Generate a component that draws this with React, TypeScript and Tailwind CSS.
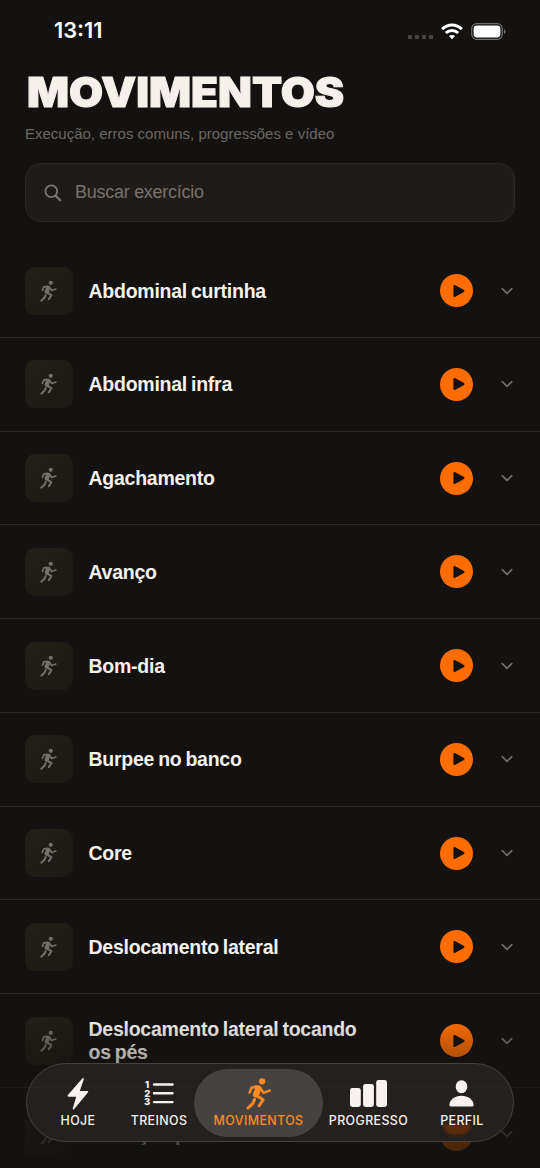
import type { ReactNode } from 'react'

const EXERCISES = [
  'Abdominal curtinha',
  'Abdominal infra',
  'Agachamento',
  'Avanço',
  'Bom-dia',
  'Burpee no banco',
  'Core',
  'Deslocamento lateral',
  'Deslocamento lateral tocando os pés',
  'Elevação pélvica',
]

function RunIcon({ className }: { className?: string }) {
  return (
    <svg viewBox="46 20 80 100" className={className} fill="none" stroke="currentColor" strokeLinecap="round" strokeLinejoin="round">
      <circle cx="95" cy="33" r="9.5" fill="currentColor" stroke="none" />
      <path d="M70 46h14c7 0 10 5 8 12l-6 18c-2 8-14 8-18 2-2-3-1-6 0-9l5-14Z" fill="currentColor" stroke="none" />
      <path d="M80 49.5 63 51.5 57 67M90 54l9 14 19-7" strokeWidth="7.5" />
      <path d="m77 76 21 13-12 18" strokeWidth="9" />
      <path d="M72 88 67 100 52 114" strokeWidth="9" />
    </svg>
  )
}

function StatusBar() {
  return (
    <div className="flex h-[62px] shrink-0 items-center justify-between pl-[54px] pr-[34px] text-white">
      <span className="text-[21.8px] font-semibold leading-none">13:11</span>
      <div className="flex items-center">
        <div className="mr-2 mt-[11px] flex gap-[3px]">
          {[0, 1, 2, 3].map(i => (
            <span key={i} className="h-1 w-1 rounded-[1px] bg-[#484644]" />
          ))}
        </div>
        <svg viewBox="0 0 22 17" className="mr-2 h-[17px] w-[22px]" fill="none" stroke="white" strokeWidth="3">
          <path d="M1.2 6.2C6.8.7 15.2.7 20.8 6.2" />
          <path d="M4.8 10c3.6-3.4 8.8-3.4 12.4 0" />
          <path d="M11 16.2 7.9 13c1.8-1.5 4.4-1.5 6.2 0Z" fill="white" stroke="none" />
        </svg>
        <svg viewBox="0 0 35 17" className="h-[17px] w-[35px]">
          <rect x=".7" y=".7" width="30.6" height="15.6" rx="5" fill="none" stroke="#72706f" strokeWidth="1.2" />
          <rect x="2.6" y="2.6" width="26.8" height="11.8" rx="3.4" fill="white" />
          <path d="M33 6c2 .8 2 4.2 0 5Z" fill="#72706f" />
        </svg>
      </div>
    </div>
  )
}

function ExerciseRow({ name }: { name: string }) {
  return (
    <li className="flex h-[93.75px] shrink-0 items-center border-b border-[#2a2826] pl-[25px] pr-[27px]">
      <div className="flex h-12 w-12 shrink-0 items-center justify-center rounded-[10px] bg-linear-to-br from-[#231f18] to-[#1b1914]">
        <RunIcon className="h-[22px] w-[17.6px] text-[#74706b]" />
      </div>
      <p className="ml-[15.5px] w-[290px] pt-px font-['Liberation_Sans',sans-serif] text-[19.5px] font-bold leading-[23px] tracking-[-0.25px] text-[#f5f1ec] [word-spacing:-1.2px]">
        {name}
      </p>
      <div className="ml-auto flex h-[33px] w-[33px] shrink-0 items-center justify-center rounded-full bg-[#ff6d00]">
        <svg viewBox="0 0 12 14" className="ml-[5px] h-[14px] w-3" fill="#141210" stroke="#141210" strokeWidth="2" strokeLinejoin="round">
          <path d="M1.4 2v10L10.5 7Z" />
        </svg>
      </div>
      <svg viewBox="0 0 12 8" className="ml-7 h-2 w-3 shrink-0" fill="none" stroke="#73706d" strokeWidth="1.6" strokeLinecap="round" strokeLinejoin="round">
        <path d="m1.2 1.6 4.8 4.8 4.8-4.8" />
      </svg>
    </li>
  )
}

function Tab({ label, active, className, children }: { label: string; active?: boolean; className: string; children: ReactNode }) {
  return (
    <div
      className={`relative flex h-[68px] shrink-0 flex-col items-center justify-end pb-[9px] ${className} ${
        active ? 'rounded-full bg-[#464240] text-[#ff8a24]' : 'text-[#f7f2ef]'
      }`}
    >
      <div className="flex h-[34px] items-center justify-center">{children}</div>
      <span className="mt-[3px] whitespace-nowrap text-[12.4px] font-medium leading-[14px] tracking-[0.4px]">{label}</span>
    </div>
  )
}

function TabBar() {
  return (
    <nav className="absolute left-[26px] top-[1063px] flex h-[79px] w-[488px] items-center overflow-hidden rounded-full border border-[#45413f] bg-[#24201e] pl-[9px]">
      {/* glow of the play buttons scrolled behind the bar */}
      <span className="absolute left-[416px] top-[60px] h-[11px] w-[28px] rounded-b-full bg-[#5a2b0c] blur-[1.5px]" />
      <span className="absolute left-[417px] -top-px h-px w-6 bg-[#6b3413]" />
      <span className="absolute left-0 top-[23px] h-px w-full bg-[#282422]" />
      <Tab label="HOJE" className="w-[84px]">
        <svg viewBox="0 0 22 32" className="h-8 w-[22px]" fill="currentColor">
          <path d="M15.3.4.9 17.1c-.6.8-.3 1.6.7 1.6h7.6L5.8 30.2c-.4 1.3.6 1.8 1.4.8L20.9 14.6c.6-.8.3-1.6-.7-1.6h-7.4L16.7 1.4C17.1.1 16.1-.5 15.3.4Z" />
        </svg>
      </Tab>
      <Tab label="TREINOS" className="ml-[2px] mr-[-2px] w-[74px]">
        <svg viewBox="0 0 30 27" className="h-[27px] w-[30px]">
          <path d="M10 4.5h18.5M10 13.3h18.5M10 22.1h18.5" stroke="currentColor" strokeWidth="2.4" strokeLinecap="round" />
          <g fill="currentColor" fontSize="9.5" fontWeight="800" textAnchor="middle">
            <text x="3.2" y="7.8">1</text>
            <text x="3.2" y="16.6">2</text>
            <text x="3.2" y="25.4">3</text>
          </g>
        </svg>
      </Tab>
      <Tab label="MOVIMENTOS" active className="w-[129px]">
        <RunIcon className="ml-px h-[33px] w-[26.4px]" />
      </Tab>
      <Tab label="PROGRESSO" className="w-[91px]">
        <svg viewBox="0 0 37 27" className="h-[27px] w-[37px]" fill="currentColor">
          <rect y="8" width="10.8" height="19" rx="2.4" />
          <rect x="13.1" y="4" width="10.8" height="23" rx="2.4" />
          <rect x="26.2" width="10.8" height="27" rx="2.4" />
        </svg>
      </Tab>
      <Tab label="PERFIL" className="w-[96px]">
        <svg viewBox="0 0 25 27" className="mr-[2px] h-[27px] w-[25px]" fill="currentColor">
          <ellipse cx="12.5" cy="6.7" rx="5.8" ry="6.5" />
          <path d="M2.5 26.6C.8 26.6.3 25.7.4 24.5.9 19.8 5.8 15.8 12.5 15.8s11.6 4 12.1 8.7c.1 1.2-.4 2.1-2.1 2.1Z" />
        </svg>
      </Tab>
    </nav>
  )
}

export default function App() {
  return (
    <div className="relative flex h-[1168px] w-[540px] flex-col overflow-hidden bg-[#141210] font-['Inter',sans-serif]">
      <StatusBar />
      <header className="h-[182.2px] shrink-0 px-[25px]">
        <h1 className="ml-[1.5px] mt-2 origin-left scale-x-[1.087] text-[40.5px] font-black leading-[46px] text-[#f5f1ea] [-webkit-text-stroke:1px_#f5f1ea]">
          MOVIMENTOS
        </h1>
        <p className="mt-2 font-['Liberation_Sans',sans-serif] text-[15px] leading-5 text-[#6b6763]">
          Execução, erros comuns, progressões e vídeo
        </p>
        <div className="mt-[19px] flex h-[59px] items-center rounded-2xl border border-[#2c2826] bg-[#1f1b19] pl-[18px]">
          <svg viewBox="0 0 18 18" className="h-[18px] w-[18px]" fill="none" stroke="#7b7774" strokeLinecap="round">
            <circle cx="7.3" cy="7.3" r="5.9" strokeWidth="1.8" />
            <path d="m11.8 11.8 4.4 4.4" strokeWidth="2.3" />
          </svg>
          <span className="ml-[13px] font-['Liberation_Sans',sans-serif] text-[18px] tracking-[-0.27px] text-[#77726e]">Buscar exercício</span>
        </div>
      </header>
      <ul className="flex flex-col">
        {EXERCISES.map(name => (
          <ExerciseRow key={name} name={name} />
        ))}
      </ul>
      <div className="absolute inset-x-0 bottom-0 h-[150px] bg-linear-to-b from-transparent via-[#141210]/50 via-40% to-[#141210]/85" />
      <TabBar />
    </div>
  )
}
